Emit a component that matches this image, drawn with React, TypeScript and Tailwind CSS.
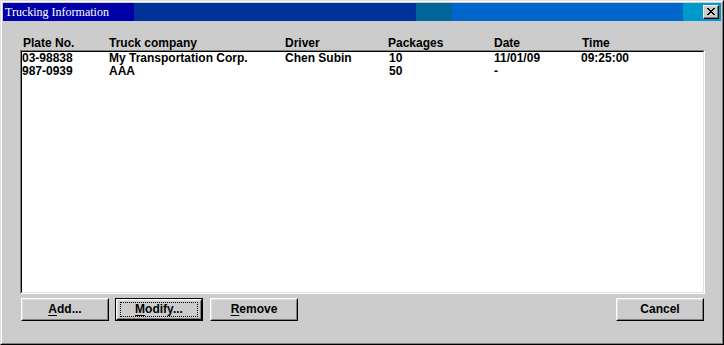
import React from 'react';

interface TruckRow {
    plate: string;
    company: string;
    driver: string;
    packages: string;
    date: string;
    time: string;
}

const rows: TruckRow[] = [
    { plate: '03-98838', company: 'My Transportation Corp.', driver: 'Chen Subin', packages: '10', date: '11/01/09', time: '09:25:00' },
    { plate: '987-0939', company: 'AAA', driver: '', packages: '50', date: '-', time: '' },
];

// header and list columns sit 1px apart in the original, so two templates
const headCols = 'grid grid-cols-[86px_176px_103px_106px_88px_1fr]';
const rowCols = 'grid grid-cols-[87px_176px_104px_105px_87px_1fr]';

const Raised: React.FC<{ children: React.ReactNode; focused?: boolean }> = ({ children, focused }) => (
    <div className={`w-[88px] h-[23px] ${focused ? 'border border-black' : ''}`}>
        <div className="h-full border-t border-l border-white border-b border-r border-b-black border-r-black">
            <div className="h-full border-t border-l border-[#dfdfdf] border-b border-r border-b-[#808080] border-r-[#808080] flex items-center justify-center">
                {focused ? (
                    <span className="px-[14px] leading-[13px] outline outline-1 outline-dotted outline-black outline-offset-0">{children}</span>
                ) : (
                    <span className="leading-[13px]">{children}</span>
                )}
            </div>
        </div>
    </div>
);

export default function App() {
    return (
        <div
            className="w-[724px] h-[345px] bg-[#cccccc] border-t border-l border-[#dfdfdf] border-b border-r border-b-black border-r-black text-black font-bold text-[12px]"
            style={{ fontFamily: '"Liberation Sans", Arial, sans-serif' }}
        >
            <div className="h-full border-t border-l border-white border-b border-r border-b-[#808080] border-r-[#808080] p-[1px] flex flex-col">
                {/* Title bar */}
                <div className="h-[18px] flex shrink-0">
                    <div className="w-[131px] bg-[#0000a8] flex items-center pl-[2px]">
                        <span className="text-white font-normal text-[12px] leading-none" style={{ fontFamily: '"Liberation Serif", "Times New Roman", serif' }}>
                            Trucking Information
                        </span>
                    </div>
                    <div className="w-[282px] bg-[#003399]" />
                    <div className="w-[36px] bg-[#006699]" />
                    <div className="w-[231px] bg-[#0066cc]" />
                    <div className="flex-1 bg-[#0099cc] flex items-center justify-end pr-[2px]">
                        <div className="w-[16px] h-[14px] bg-[#cccccc] border-t border-l border-white border-b border-r border-b-black border-r-black">
                            <div className="h-full border-b border-r border-[#808080] flex items-center justify-center">
                                <svg width="8" height="7" viewBox="0 0 8 7" shapeRendering="crispEdges">
                                    <path d="M0 0h2v1h-2zM6 0h2v1h-2zM1 1h2v1h-2zM5 1h2v1h-2zM2 2h4v1h-4zM3 3h2v1h-2zM2 4h4v1h-4zM1 5h2v1h-2zM5 5h2v1h-2zM0 6h2v1h-2zM6 6h2v1h-2z" fill="#000" />
                                </svg>
                            </div>
                        </div>
                    </div>
                </div>

                {/* Body */}
                <div className="flex-1 pt-[16px] pl-[17px] pr-[16px] flex flex-col">
                    <div className={`${headCols} h-[13px] leading-[13px] pl-[3px]`}>
                        <span>Plate No.</span>
                        <span>Truck company</span>
                        <span>Driver</span>
                        <span>Packages</span>
                        <span>Date</span>
                        <span>Time</span>
                    </div>

                    <div className="h-[244px] border-t border-l border-[#808080] border-b border-r border-b-white border-r-white">
                        <div className="h-full bg-white border-t border-l border-black border-b border-r border-b-[#dfdfdf] border-r-[#dfdfdf]">
                            {rows.map((r) => (
                                <div key={r.plate} className={`${rowCols} h-[13px] leading-[13px]`}>
                                    <span>{r.plate}</span>
                                    <span>{r.company}</span>
                                    <span>{r.driver}</span>
                                    <span>{r.packages}</span>
                                    <span>{r.date}</span>
                                    <span>{r.time}</span>
                                </div>
                            ))}
                        </div>
                    </div>

                    <div className="flex mt-[4px] pl-[1px] pr-[1px]">
                        <Raised><span className="underline underline-offset-2">A</span>dd...</Raised>
                        <div className="w-[6px]" />
                        <Raised focused><span className="underline underline-offset-2">M</span>odify...</Raised>
                        <div className="w-[7px]" />
                        <Raised><span className="underline underline-offset-2">R</span>emove</Raised>
                        <div className="flex-1" />
                        <Raised>Cancel</Raised>
                    </div>
                </div>
            </div>
        </div>
    );
}
